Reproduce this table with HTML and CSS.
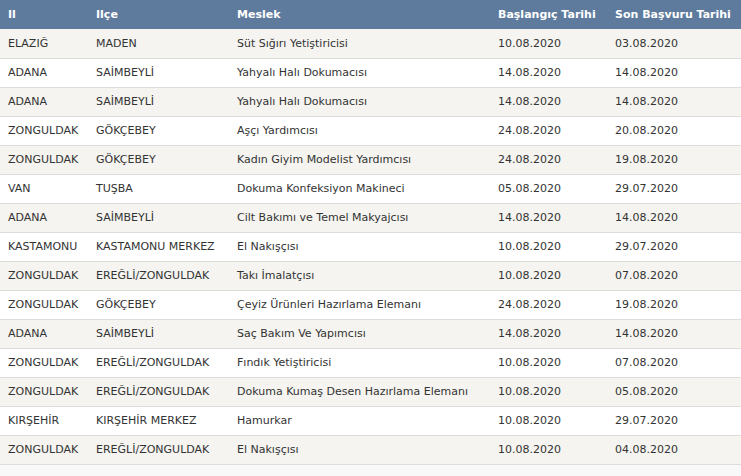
FILE: index.html
```html
<!DOCTYPE html>
<html lang="tr">
<head>
<meta charset="utf-8">
<link rel="stylesheet" href="styles.css">
</head>
<body>
<table class="grid">
<colgroup>
<col class="c1"><col class="c2"><col class="c3"><col class="c4"><col class="c5">
</colgroup>
<thead>
<tr><th>Il</th><th>Ilçe</th><th>Meslek</th><th>Başlangıç Tarihi</th><th>Son Başvuru Tarihi</th></tr>
</thead>
<tbody>
<tr><td>ELAZIĞ</td><td>MADEN</td><td>Süt Sığırı Yetiştiricisi</td><td>10.08.2020</td><td>03.08.2020</td></tr>
<tr><td>ADANA</td><td>SAİMBEYLİ</td><td>Yahyalı Halı Dokumacısı</td><td>14.08.2020</td><td>14.08.2020</td></tr>
<tr><td>ADANA</td><td>SAİMBEYLİ</td><td>Yahyalı Halı Dokumacısı</td><td>14.08.2020</td><td>14.08.2020</td></tr>
<tr><td>ZONGULDAK</td><td>GÖKÇEBEY</td><td>Aşçı Yardımcısı</td><td>24.08.2020</td><td>20.08.2020</td></tr>
<tr><td>ZONGULDAK</td><td>GÖKÇEBEY</td><td>Kadın Giyim Modelist Yardımcısı</td><td>24.08.2020</td><td>19.08.2020</td></tr>
<tr><td>VAN</td><td>TUŞBA</td><td>Dokuma Konfeksiyon Makineci</td><td>05.08.2020</td><td>29.07.2020</td></tr>
<tr><td>ADANA</td><td>SAİMBEYLİ</td><td>Cilt Bakımı ve Temel Makyajcısı</td><td>14.08.2020</td><td>14.08.2020</td></tr>
<tr><td>KASTAMONU</td><td>KASTAMONU MERKEZ</td><td>El Nakışçısı</td><td>10.08.2020</td><td>29.07.2020</td></tr>
<tr><td>ZONGULDAK</td><td>EREĞLİ/ZONGULDAK</td><td>Takı İmalatçısı</td><td>10.08.2020</td><td>07.08.2020</td></tr>
<tr><td>ZONGULDAK</td><td>GÖKÇEBEY</td><td>Çeyiz Ürünleri Hazırlama Elemanı</td><td>24.08.2020</td><td>19.08.2020</td></tr>
<tr><td>ADANA</td><td>SAİMBEYLİ</td><td>Saç Bakım Ve Yapımcısı</td><td>14.08.2020</td><td>14.08.2020</td></tr>
<tr><td>ZONGULDAK</td><td>EREĞLİ/ZONGULDAK</td><td>Fındık Yetiştiricisi</td><td>10.08.2020</td><td>07.08.2020</td></tr>
<tr><td>ZONGULDAK</td><td>EREĞLİ/ZONGULDAK</td><td>Dokuma Kumaş Desen Hazırlama Elemanı</td><td>10.08.2020</td><td>05.08.2020</td></tr>
<tr><td>KIRŞEHİR</td><td>KIRŞEHİR MERKEZ</td><td>Hamurkar</td><td>10.08.2020</td><td>29.07.2020</td></tr>
<tr><td>ZONGULDAK</td><td>EREĞLİ/ZONGULDAK</td><td>El Nakışçısı</td><td>10.08.2020</td><td>04.08.2020</td></tr>
</tbody>
</table>
</body>
</html>
```
FILE: styles.css
```css
html, body {
  margin: 0;
  padding: 0;
  background: #f8f8f8;
}
body {
  font-family: "DejaVu Sans", Verdana, sans-serif;
  font-size: 11px;
  color: #333;
}
.grid {
  width: 741px;
  border-collapse: collapse;
  table-layout: fixed;
}
.c1 { width: 88px; }
.c2 { width: 141px; }
.c3 { width: 261px; }
.c4 { width: 117px; }
.c5 { width: 134px; }
.grid th {
  background: #5e7b9d;
  color: #fff;
  font-weight: bold;
  text-align: left;
  height: 29px;
  padding: 0 0 0 8px;
  box-sizing: border-box;
  vertical-align: middle;
}
.grid td {
  height: 29px;
  padding: 0 0 0 8px;
  box-sizing: border-box;
  border-bottom: 1px solid #dcdcdc;
  vertical-align: middle;
  white-space: nowrap;
}
.grid tbody tr:nth-child(odd) td { background: #f5f4f0; }
.grid tbody tr:nth-child(even) td { background: #ffffff; }
```
